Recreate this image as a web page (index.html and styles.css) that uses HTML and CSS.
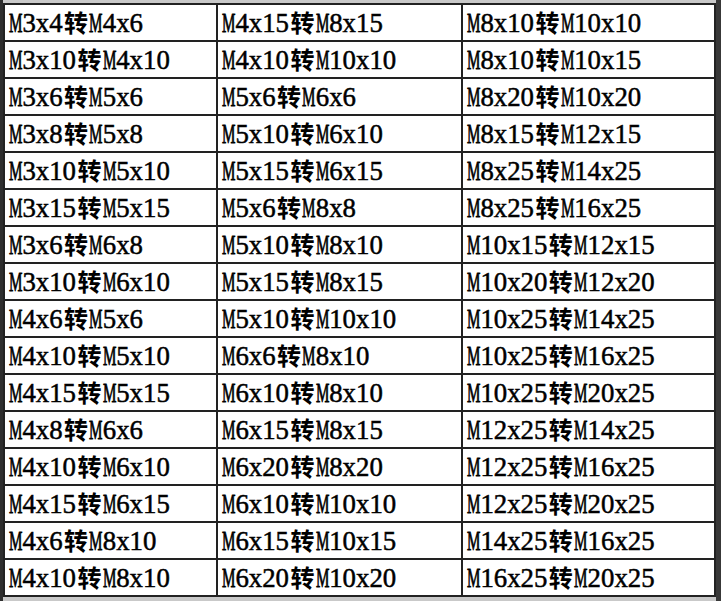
FILE: index.html
```html
<!DOCTYPE html>
<html lang="zh">
<head>
<meta charset="utf-8">
<title>转换规格</title>
<link rel="stylesheet" href="styles.css">
</head>
<body>
<div class="frame">
  <div class="edge-l"></div>
  <div class="sheet">
    <div class="grid">
      <div class="cell"><span class="t"><span class="m">M</span>3x4<span class="z">转</span><span class="m">M</span>4x6</span></div>
      <div class="cell"><span class="t"><span class="m">M</span>4x15<span class="z">转</span><span class="m">M</span>8x15</span></div>
      <div class="cell"><span class="t"><span class="m">M</span>8x10<span class="z">转</span><span class="m">M</span>10x10</span></div>

      <div class="cell"><span class="t"><span class="m">M</span>3x10<span class="z">转</span><span class="m">M</span>4x10</span></div>
      <div class="cell"><span class="t"><span class="m">M</span>4x10<span class="z">转</span><span class="m">M</span>10x10</span></div>
      <div class="cell"><span class="t"><span class="m">M</span>8x10<span class="z">转</span><span class="m">M</span>10x15</span></div>

      <div class="cell"><span class="t"><span class="m">M</span>3x6<span class="z">转</span><span class="m">M</span>5x6</span></div>
      <div class="cell"><span class="t"><span class="m">M</span>5x6<span class="z">转</span><span class="m">M</span>6x6</span></div>
      <div class="cell"><span class="t"><span class="m">M</span>8x20<span class="z">转</span><span class="m">M</span>10x20</span></div>

      <div class="cell"><span class="t"><span class="m">M</span>3x8<span class="z">转</span><span class="m">M</span>5x8</span></div>
      <div class="cell"><span class="t"><span class="m">M</span>5x10<span class="z">转</span><span class="m">M</span>6x10</span></div>
      <div class="cell"><span class="t"><span class="m">M</span>8x15<span class="z">转</span><span class="m">M</span>12x15</span></div>

      <div class="cell"><span class="t"><span class="m">M</span>3x10<span class="z">转</span><span class="m">M</span>5x10</span></div>
      <div class="cell"><span class="t"><span class="m">M</span>5x15<span class="z">转</span><span class="m">M</span>6x15</span></div>
      <div class="cell"><span class="t"><span class="m">M</span>8x25<span class="z">转</span><span class="m">M</span>14x25</span></div>

      <div class="cell"><span class="t"><span class="m">M</span>3x15<span class="z">转</span><span class="m">M</span>5x15</span></div>
      <div class="cell"><span class="t"><span class="m">M</span>5x6<span class="z">转</span><span class="m">M</span>8x8</span></div>
      <div class="cell"><span class="t"><span class="m">M</span>8x25<span class="z">转</span><span class="m">M</span>16x25</span></div>

      <div class="cell"><span class="t"><span class="m">M</span>3x6<span class="z">转</span><span class="m">M</span>6x8</span></div>
      <div class="cell"><span class="t"><span class="m">M</span>5x10<span class="z">转</span><span class="m">M</span>8x10</span></div>
      <div class="cell"><span class="t"><span class="m">M</span>10x15<span class="z">转</span><span class="m">M</span>12x15</span></div>

      <div class="cell"><span class="t"><span class="m">M</span>3x10<span class="z">转</span><span class="m">M</span>6x10</span></div>
      <div class="cell"><span class="t"><span class="m">M</span>5x15<span class="z">转</span><span class="m">M</span>8x15</span></div>
      <div class="cell"><span class="t"><span class="m">M</span>10x20<span class="z">转</span><span class="m">M</span>12x20</span></div>

      <div class="cell"><span class="t"><span class="m">M</span>4x6<span class="z">转</span><span class="m">M</span>5x6</span></div>
      <div class="cell"><span class="t"><span class="m">M</span>5x10<span class="z">转</span><span class="m">M</span>10x10</span></div>
      <div class="cell"><span class="t"><span class="m">M</span>10x25<span class="z">转</span><span class="m">M</span>14x25</span></div>

      <div class="cell"><span class="t"><span class="m">M</span>4x10<span class="z">转</span><span class="m">M</span>5x10</span></div>
      <div class="cell"><span class="t"><span class="m">M</span>6x6<span class="z">转</span><span class="m">M</span>8x10</span></div>
      <div class="cell"><span class="t"><span class="m">M</span>10x25<span class="z">转</span><span class="m">M</span>16x25</span></div>

      <div class="cell"><span class="t"><span class="m">M</span>4x15<span class="z">转</span><span class="m">M</span>5x15</span></div>
      <div class="cell"><span class="t"><span class="m">M</span>6x10<span class="z">转</span><span class="m">M</span>8x10</span></div>
      <div class="cell"><span class="t"><span class="m">M</span>10x25<span class="z">转</span><span class="m">M</span>20x25</span></div>

      <div class="cell"><span class="t"><span class="m">M</span>4x8<span class="z">转</span><span class="m">M</span>6x6</span></div>
      <div class="cell"><span class="t"><span class="m">M</span>6x15<span class="z">转</span><span class="m">M</span>8x15</span></div>
      <div class="cell"><span class="t"><span class="m">M</span>12x25<span class="z">转</span><span class="m">M</span>14x25</span></div>

      <div class="cell"><span class="t"><span class="m">M</span>4x10<span class="z">转</span><span class="m">M</span>6x10</span></div>
      <div class="cell"><span class="t"><span class="m">M</span>6x20<span class="z">转</span><span class="m">M</span>8x20</span></div>
      <div class="cell"><span class="t"><span class="m">M</span>12x25<span class="z">转</span><span class="m">M</span>16x25</span></div>

      <div class="cell"><span class="t"><span class="m">M</span>4x15<span class="z">转</span><span class="m">M</span>6x15</span></div>
      <div class="cell"><span class="t"><span class="m">M</span>6x10<span class="z">转</span><span class="m">M</span>10x10</span></div>
      <div class="cell"><span class="t"><span class="m">M</span>12x25<span class="z">转</span><span class="m">M</span>20x25</span></div>

      <div class="cell"><span class="t"><span class="m">M</span>4x6<span class="z">转</span><span class="m">M</span>8x10</span></div>
      <div class="cell"><span class="t"><span class="m">M</span>6x15<span class="z">转</span><span class="m">M</span>10x15</span></div>
      <div class="cell"><span class="t"><span class="m">M</span>14x25<span class="z">转</span><span class="m">M</span>16x25</span></div>

      <div class="cell"><span class="t"><span class="m">M</span>4x10<span class="z">转</span><span class="m">M</span>8x10</span></div>
      <div class="cell"><span class="t"><span class="m">M</span>6x20<span class="z">转</span><span class="m">M</span>10x20</span></div>
      <div class="cell"><span class="t"><span class="m">M</span>16x25<span class="z">转</span><span class="m">M</span>20x25</span></div>
    </div>
  </div>
  <div class="edge-r"></div>
</div>
</body>
</html>
```

FILE: styles.css
```css
html, body {
  margin: 0;
  padding: 0;
}

body {
  background: #c9c9c9;
  font-family: "Liberation Serif", "Noto Sans CJK SC", serif;
  color: #000;
}

.frame {
  display: flex;
  width: 721px;
  height: 601px;
  overflow: hidden;
}

.edge-l {
  width: 3px;
  background: #2e2e2e;
  flex: none;
}

.edge-r {
  width: 5px;
  background: #383838;
  flex: none;
}

.sheet {
  flex: 1;
  padding-top: 3px;
}

.grid {
  display: grid;
  grid-template-columns: 211px 243px 251px;
  grid-auto-rows: 35px;
  gap: 2px;
  padding: 2px;
  background: #222;
  width: max-content;
}

.cell {
  background: #fff;
  display: flex;
  align-items: center;
  box-sizing: border-box;
  padding: 2px 0 0 4px;
  white-space: nowrap;
  overflow: hidden;
}

.t {
  font-family: "Liberation Serif", serif;
  font-size: 26.8px;
  line-height: 1;
  -webkit-text-stroke: 0.5px #000;
}

.m {
  display: inline-block;
  transform: scaleX(0.5625);
  transform-origin: 0 50%;
  margin-right: -0.389em;
  -webkit-text-stroke: 0.8px #000;
}

.z {
  display: inline-block;
  width: 26.8px;
  text-align: center;
  font-family: "Noto Sans CJK SC", sans-serif;
  font-size: 24px;
  font-weight: 600;
  -webkit-text-stroke: 0;
}
```
